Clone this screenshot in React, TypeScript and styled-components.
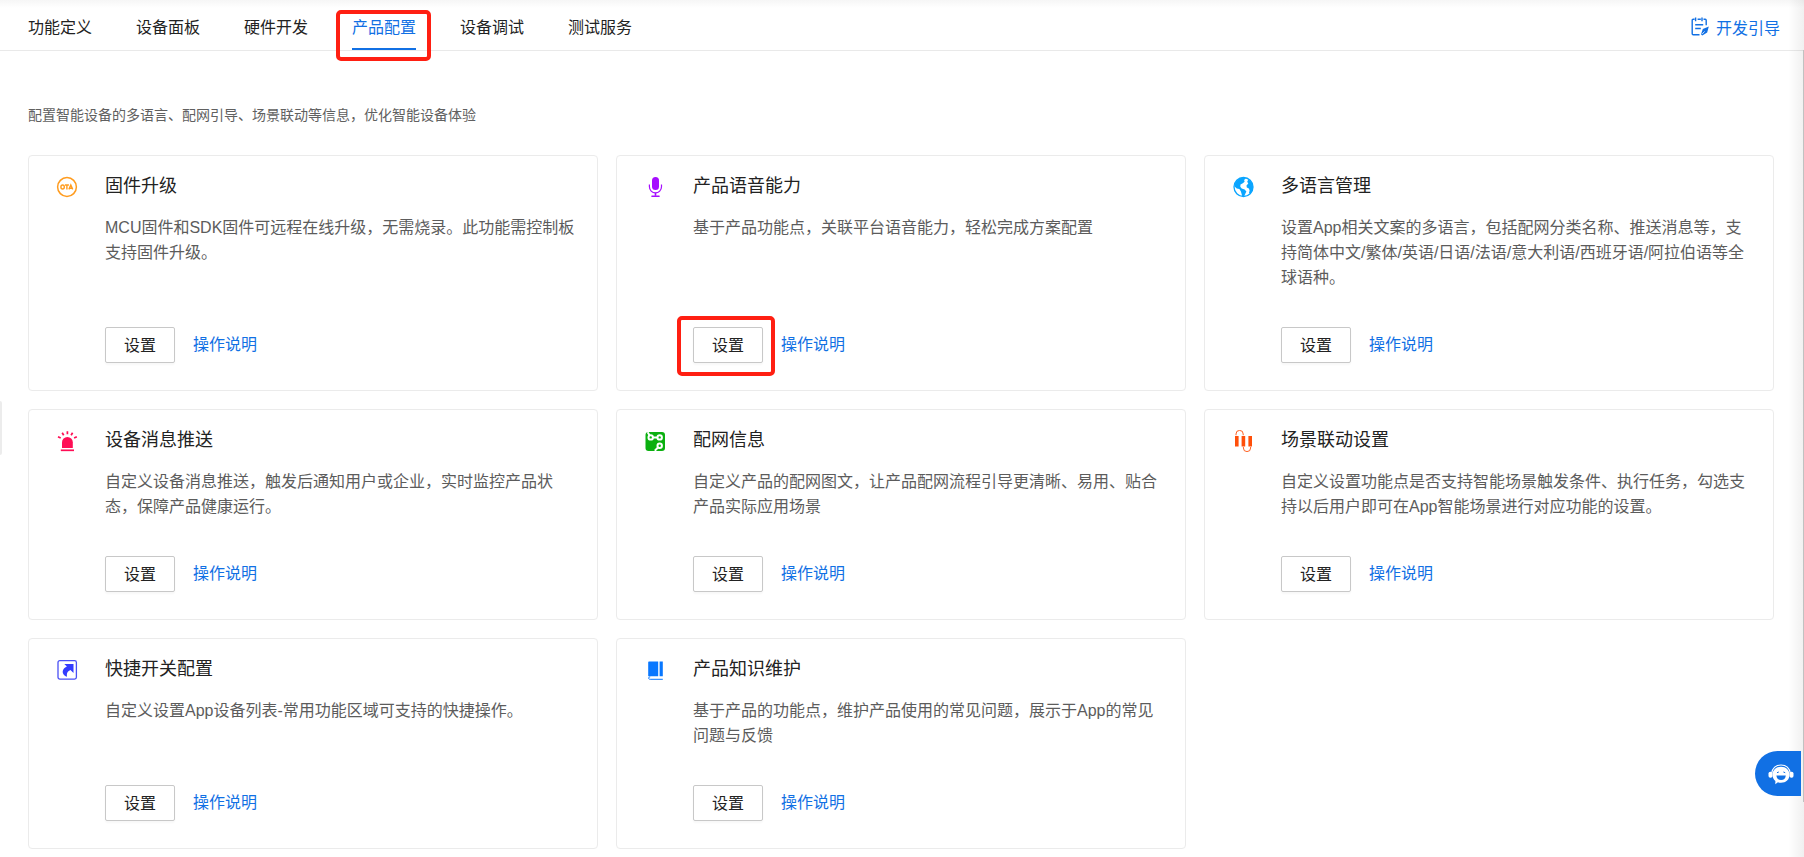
import React from 'react';
import styled, { createGlobalStyle } from 'styled-components';

const BLUE = '#1170e4';
const RED = '#ff1f12';

const GlobalStyle = createGlobalStyle`
  * { box-sizing: border-box; }
  body {
    margin: 0;
    background: #fff;
    color: #222;
    font-family: "Liberation Sans", "Noto Sans CJK SC", sans-serif;
    font-size: 16px;
  }
  a { text-decoration: none; }
  h2, p { margin: 0; font-weight: 400; }
`;

const Page = styled.div`
  position: relative;
  min-height: 100vh;
`;

const Header = styled.header`
  display: flex;
  justify-content: space-between;
  height: 51px;
  padding: 0 24px 0 28px;
  border-bottom: 1px solid #e9e9e9;
  background: linear-gradient(#f6f6f6, #fff 8px);
`;

const Tabs = styled.nav`
  display: flex;
  gap: 44px;
`;

const Tab = styled.a<{ $active?: boolean }>`
  position: relative;
  padding-top: 4px;
  line-height: 48px;
  height: 50px;
  color: ${(p) => (p.$active ? BLUE : '#222')};
  border-bottom: 2px solid ${(p) => (p.$active ? BLUE : 'transparent')};
`;

const Highlight = styled.span<{ $inset: string }>`
  position: absolute;
  inset: ${(p) => p.$inset};
  border: 4px solid ${RED};
  border-radius: 5px;
  pointer-events: none;
`;

const Guide = styled.a`
  display: flex;
  align-items: center;
  gap: 7px;
  padding-top: 3px;
  color: ${BLUE};
`;

const Main = styled.main`
  padding: 53px 30px 8px 28px;
`;

const Intro = styled.p`
  margin-bottom: 29px;
  font-size: 14px;
  line-height: 22px;
  color: #606060;
`;

const Grid = styled.div`
  display: grid;
  grid-template-columns: repeat(3, minmax(0, 1fr));
  gap: 18px;
`;

const Card = styled.section`
  display: flex;
  gap: 27px;
  padding: 16px 20px 27px 27px;
  border: 1px solid #ebebeb;
  border-radius: 4px;
`;

const IconBox = styled.div`
  flex: none;
  width: 22px;
  height: 22px;
  margin-top: 4px;
  svg { display: block; }
`;

const Body = styled.div`
  flex: 1;
  min-width: 0;
  display: flex;
  flex-direction: column;
`;

const Title = styled.h2`
  font-size: 18px;
  line-height: 28px;
`;

const Description = styled.p`
  flex: 1;
  min-height: 50px;
  margin: 15px 0 37px;
  line-height: 25px;
  color: #5c5c5c;
`;

const Actions = styled.div`
  display: flex;
  align-items: center;
  gap: 18px;
`;

const ButtonWrap = styled.div`
  position: relative;
  display: flex;
`;

const SetButton = styled.button`
  width: 70px;
  height: 36px;
  padding: 0 0 2px;
  border: 1px solid #c8c8c8;
  border-radius: 2px;
  background: #fff;
  box-shadow: 0 2px 2px rgba(0, 0, 0, 0.03);
  color: #222;
  font: inherit;
  cursor: pointer;
`;

const HelpLink = styled.a`
  color: ${BLUE};
  line-height: 36px;
`;

const SideHandle = styled.div`
  position: absolute;
  left: 0;
  top: 401px;
  width: 2px;
  height: 54px;
  background: #ececec;
  border-radius: 0 2px 2px 0;
`;

const EdgeShadow = styled.div`
  position: absolute;
  top: 0;
  right: 0;
  bottom: 0;
  width: 16px;
  background: linear-gradient(to right, rgba(0, 0, 0, 0), rgba(0, 0, 0, 0.06));
  pointer-events: none;
`;

const ScrollThumb = styled.div`
  position: absolute;
  top: 50px;
  right: 0;
  width: 1px;
  height: 752px;
  background: #c1c1c1;
`;

const ChatButton = styled.button`
  position: fixed;
  right: 3px;
  bottom: 61px;
  width: 46px;
  height: 45px;
  padding: 2px 0 0 6px;
  display: flex;
  align-items: center;
  justify-content: center;
  border: 0;
  border-radius: 23px 0 0 23px;
  background: ${BLUE};
  cursor: pointer;
`;

const Icon = ({ children }: { children: React.ReactNode }) => (
  <svg width="22" height="22" viewBox="0 0 22 22" fill="none" aria-hidden="true">
    {children}
  </svg>
);

const OtaIcon = () => (
  <Icon>
    <circle cx="11" cy="11" r="9.4" stroke="#ff9c1f" strokeWidth="1.5" />
    <g stroke="#ff9c1f" strokeWidth="1.4">
      <ellipse cx="6.6" cy="11" rx="1.7" ry="2" />
      <path d="M8.9 9h4M10.9 9v4.5M12.9 13.4l1.9-4.4 1.9 4.4M13.6 12.2h2.4" />
    </g>
  </Icon>
);

const MicIcon = () => (
  <Icon>
    <rect x="8" y="1" width="7" height="13" rx="3.5" fill="#a60dff" />
    <path d="M5.4 8.5v2.3a6 6 0 0 0 12.1 0V8.5" stroke="#a60dff" strokeWidth="1.2" />
    <path d="M11.5 16.8v3" stroke="#a60dff" strokeWidth="1.6" />
    <path d="M8 20.2h7" stroke="#a60dff" strokeWidth="1.6" strokeLinecap="round" />
  </Icon>
);

const GlobeIcon = () => (
  <Icon>
    <circle cx="11.5" cy="11" r="9.5" stroke="#0aa5ff" strokeWidth="1.3" />
    <path
      d="M9 1.9C5.1 3 2.5 6.5 2.5 10.5l2.3 1.9 2.6.6 1.5 2.4 1.3 4.7 1.8.3 1.4-3 1-1.9-1.8-2.1-2.9-.9-1.4-1.7.2-2.3 2.3-1.2 1.8-1.6-.5-1.8 1.7-1.3-1.3-1C11.5 1.4 10.2 1.5 9 1.9z"
      fill="#0aa5ff"
    />
    <path
      d="M16.5 3.3l-1.3 2.5 1.1 1.6-1.8 2.2.3 2 2.1.8.7 2.1-.6 2.6 1.1.6c2-1.8 3-4.2 2.9-6.9-.1-3.2-1.8-5.8-4.5-7.5z"
      fill="#0aa5ff"
    />
  </Icon>
);

const SirenIcon = () => (
  <Icon>
    <path d="M6 18v-5.7a5.4 5.4 0 0 1 10.8 0V18z" fill="#ff0d55" />
    <path d="M4.8 20.3h13.2" stroke="#ff0d55" strokeWidth="1.7" />
    <path
      d="M11.4 1.2v3M6.2 2.7l1.5 2.5M16.6 2.7l-1.5 2.5M2 6.7l2.7 1.3M20.8 6.7L18.1 8"
      stroke="#ff0d55"
      strokeWidth="1.7"
    />
  </Icon>
);

const BoardIcon = () => (
  <Icon>
    <rect x="1.5" y="2" width="19.5" height="19" rx="3" fill="#0bb010" />
    <g stroke="#fff" strokeWidth="2">
      <circle cx="6.7" cy="7.4" r="2.2" />
      <circle cx="15.7" cy="7.4" r="2.2" />
      <circle cx="15.7" cy="15.7" r="2.2" />
      <path d="M8.8 7.4h5M5.5 5.3L3.6 2.2M14.2 17.3l-3.4 3.4" />
    </g>
  </Icon>
);

const SceneIcon = () => (
  <Icon>
    <g stroke="#ff4f0a">
      <path d="M4.8 6v10.5M11.4 6v10.5M18.2 6v10.5" strokeWidth="3.6" />
      <path d="M4 5.2V4a3.6 3.6 0 0 1 7.2 0v1.2M11.4 17v1a3.6 3.6 0 0 0 7.2 0v-1" strokeWidth=".9" />
    </g>
  </Icon>
);

const ShortcutIcon = () => (
  <Icon>
    <rect x="2" y="1.7" width="18.4" height="18.4" rx="1.8" stroke="#4a50f5" strokeWidth="1.3" />
    <path
      d="M8.3 5h9.2v9l-3-2.9c-2.6 1.2-4 2.7-3.5 6.6C7.2 16.2 6.1 13.6 7 11.2c.7-1.8 2-2.7 3.9-3.7z"
      fill="#333cff"
    />
  </Icon>
);

const BookIcon = () => (
  <Icon>
    <path d="M4.2 3.5c0-.7.4-1 1-1h9v14.8h-10zM15.6 2.5h3.2v14.8h-3.2z" fill="#0877ff" />
    <path d="M18.8 20.3H6.2c-2.2 0-2.2-2.4 0-2.4" stroke="#0877ff" strokeWidth="1" />
  </Icon>
);

const GuideIcon = () => (
  <svg width="18" height="19" viewBox="0 0 18 19" fill="none" stroke={BLUE} strokeWidth="1.4" aria-hidden="true">
    <path d="M6.6 2.3h3.2M12.5 2.3h1.7q1 0 1 1v5M3.6 2.3H2.2q-1 0-1 1v13.5q0 1 1 1h6.3" />
    <path d="M4.6.6v3.6M11 .6v3.6M4.2 7.8h8M4.2 11.5h5.6" />
    <path d="M17.8 9.4l-6 2.6-1.8 5.4 1.3 1 4.9-2.9z" fill={BLUE} stroke="none" />
    <path d="M11 17.2l2.6-2.8" stroke="#fff" strokeWidth=".8" />
  </svg>
);

const ChatIcon = () => (
  <svg width="26" height="21" viewBox="0 0 26 21" fill="none" aria-hidden="true">
    <path d="M3.6 9.5C4.5 4 8.2 1 13 1s8.5 3 9.4 8.5" stroke="#fff" strokeWidth="1.2" />
    <rect x="0.5" y="7.8" width="4" height="6" rx="1.8" fill="#fff" />
    <rect x="21.5" y="7.8" width="4" height="6" rx="1.8" fill="#fff" />
    <path
      d="M13 2.8c5 0 8.5 3.3 8.5 8 0 4.8-3.5 8-8.5 8-1.2 0-2.1-.1-3.1-.5L7.3 20.3l.1-3.2C5.5 15.6 4.5 13.5 4.5 10.8c0-4.7 3.5-8 8.5-8z"
      fill="#fff"
    />
    <path d="M8.4 11.5h9.4c-.3 3-2 4.6-4.7 4.6s-4.4-1.6-4.7-4.6z" fill={BLUE} />
    <path d="M9 8.7l1.8-.7M15.4 8l1.8.7" stroke={BLUE} strokeWidth="1" />
  </svg>
);

const tabs = ['功能定义', '设备面板', '硬件开发', '产品配置', '设备调试', '测试服务'];
const activeTab = '产品配置';

interface Feature {
  title: string;
  text: string;
  icon: React.ComponentType;
  marked?: boolean;
}

const features: Feature[] = [
  {
    title: '固件升级',
    text: 'MCU固件和SDK固件可远程在线升级，无需烧录。此功能需控制板支持固件升级。',
    icon: OtaIcon,
  },
  {
    title: '产品语音能力',
    text: '基于产品功能点，关联平台语音能力，轻松完成方案配置',
    icon: MicIcon,
    marked: true,
  },
  {
    title: '多语言管理',
    text: '设置App相关文案的多语言，包括配网分类名称、推送消息等，支持简体中文/繁体/英语/日语/法语/意大利语/西班牙语/阿拉伯语等全球语种。',
    icon: GlobeIcon,
  },
  {
    title: '设备消息推送',
    text: '自定义设备消息推送，触发后通知用户或企业，实时监控产品状态，保障产品健康运行。',
    icon: SirenIcon,
  },
  {
    title: '配网信息',
    text: '自定义产品的配网图文，让产品配网流程引导更清晰、易用、贴合产品实际应用场景',
    icon: BoardIcon,
  },
  {
    title: '场景联动设置',
    text: '自定义设置功能点是否支持智能场景触发条件、执行任务，勾选支持以后用户即可在App智能场景进行对应功能的设置。',
    icon: SceneIcon,
  },
  {
    title: '快捷开关配置',
    text: '自定义设置App设备列表-常用功能区域可支持的快捷操作。',
    icon: ShortcutIcon,
  },
  {
    title: '产品知识维护',
    text: '基于产品的功能点，维护产品使用的常见问题，展示于App的常见问题与反馈',
    icon: BookIcon,
  },
];

const FeatureCard = ({ title, text, icon: FeatureIcon, marked }: Feature) => (
  <Card>
    <IconBox>
      <FeatureIcon />
    </IconBox>
    <Body>
      <Title>{title}</Title>
      <Description>{text}</Description>
      <Actions>
        <ButtonWrap>
          <SetButton type="button">设置</SetButton>
          {marked && <Highlight $inset="-11px -12px -13px -16px" />}
        </ButtonWrap>
        <HelpLink href="#help">操作说明</HelpLink>
      </Actions>
    </Body>
  </Card>
);

export default function App() {
  return (
    <Page lang="zh-CN">
      <GlobalStyle />
      <Header>
        <Tabs>
          {tabs.map((name) => (
            <Tab key={name} href="#tab" $active={name === activeTab}>
              {name}
              {name === activeTab && <Highlight $inset="10px -15px -13px -16px" />}
            </Tab>
          ))}
        </Tabs>
        <Guide href="#guide">
          <GuideIcon />
          开发引导
        </Guide>
      </Header>
      <Main>
        <Intro>配置智能设备的多语言、配网引导、场景联动等信息，优化智能设备体验</Intro>
        <Grid>
          {features.map((feature) => (
            <FeatureCard key={feature.title} {...feature} />
          ))}
        </Grid>
      </Main>
      <SideHandle />
      <EdgeShadow />
      <ScrollThumb />
      <ChatButton type="button" aria-label="在线客服">
        <ChatIcon />
      </ChatButton>
    </Page>
  );
}
